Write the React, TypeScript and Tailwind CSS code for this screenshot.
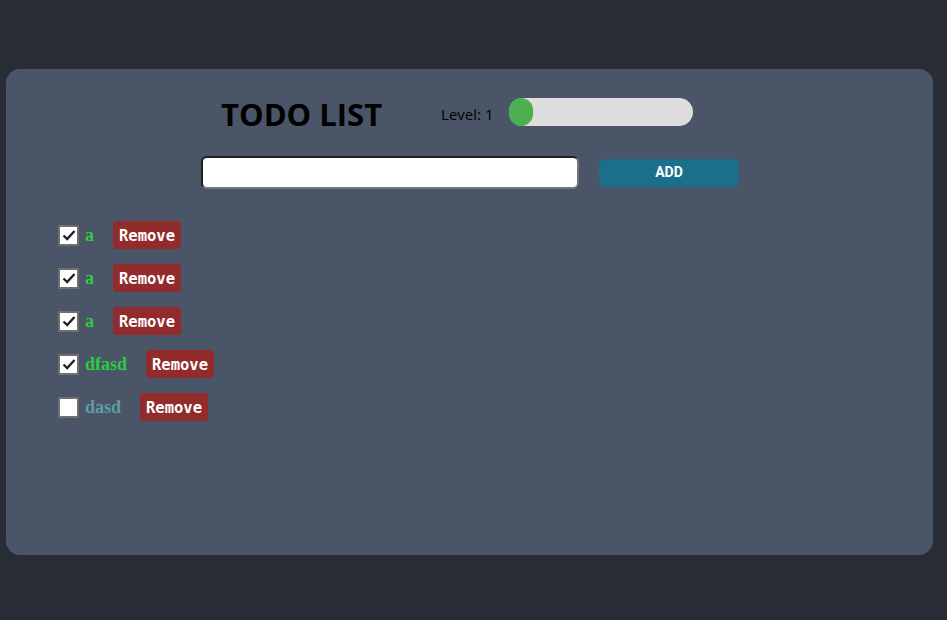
import { useState } from "react";

type Todo = { id: number; text: string; done: boolean };

const initial: Todo[] = [
  { id: 1, text: "a", done: true },
  { id: 2, text: "a", done: true },
  { id: 3, text: "a", done: true },
  { id: 4, text: "dfasd", done: true },
  { id: 5, text: "dasd", done: false },
];

function Check({ checked, onClick }: { checked: boolean; onClick: () => void }) {
  return (
    <button
      onClick={onClick}
      className="flex h-[21px] w-[21px] shrink-0 items-center justify-center border-[2.5px] border-[#6f6f6f] bg-white"
    >
      {checked && (
        <svg viewBox="0 0 16 16" className="h-[16px] w-[16px]">
          <path d="M2.5 8.5 L6.2 12 L13.5 4" fill="none" stroke="#222" strokeWidth="2.4" />
        </svg>
      )}
    </button>
  );
}

export default function App() {
  const [todos, setTodos] = useState(initial);
  const [text, setText] = useState("");

  const add = () => {
    if (!text.trim()) return;
    setTodos([...todos, { id: Date.now(), text, done: false }]);
    setText("");
  };

  return (
    <div className="min-h-[620px] bg-[#282c34] pt-[69px] pl-[6px] pr-[14px]">
      <div className="h-[486px] rounded-[14px] bg-[#4a5568] pt-[29px]">
        <div className="flex items-center pl-[215px]">
          <h1 className="font-['Open_Sans',sans-serif] text-[31px] font-bold leading-none text-black">
            TODO LIST
          </h1>
          <span className="ml-[59px] font-['Open_Sans',sans-serif] text-[15px] text-black">
            Level: 1
          </span>
          <div className="mb-[4px] ml-[16px] h-[28px] w-[184px] rounded-full bg-[#dddddd]">
            <div className="h-[28px] w-[24px] rounded-full bg-[#4caf50]" />
          </div>
        </div>

        <div className="mt-[26px] flex items-center pl-[195px]">
          <input
            value={text}
            onChange={(e) => setText(e.target.value)}
            className="h-[33px] w-[378px] rounded-[6px] border-2 border-t-[#1f1f1f] border-l-[#1f1f1f] border-r-[#767676] border-b-[#767676] bg-white px-2 outline-none"
          />
          <button
            onClick={add}
            className="ml-[20px] h-[28px] w-[140px] rounded-[6px] bg-[#1a6f8a] font-['Roboto',sans-serif] text-[14px] font-bold text-white"
          >
            ADD
          </button>
        </div>

        <ul className="mt-[32px] flex flex-col gap-[15px] pl-[52px]">
          {todos.map((t) => (
            <li key={t.id} className="flex h-[28px] items-center">
              <Check
                checked={t.done}
                onClick={() =>
                  setTodos(todos.map((x) => (x.id === t.id ? { ...x, done: !x.done } : x)))
                }
              />
              <span
                className={`ml-[6px] font-['Liberation_Serif',serif] text-[18px] font-bold ${
                  t.done ? "text-[#2ecc40]" : "text-[#5f9ea0]"
                }`}
              >
                {t.text}
              </span>
              <button
                onClick={() => setTodos(todos.filter((x) => x.id !== t.id))}
                className="ml-[19px] h-[28px] rounded-[3px] bg-[#922b2b] px-[6px] pt-[3px] font-['DejaVu_Sans_Mono',monospace] text-[15.5px] font-bold text-white"
              >
                Remove
              </button>
            </li>
          ))}
        </ul>
      </div>
    </div>
  );
}
